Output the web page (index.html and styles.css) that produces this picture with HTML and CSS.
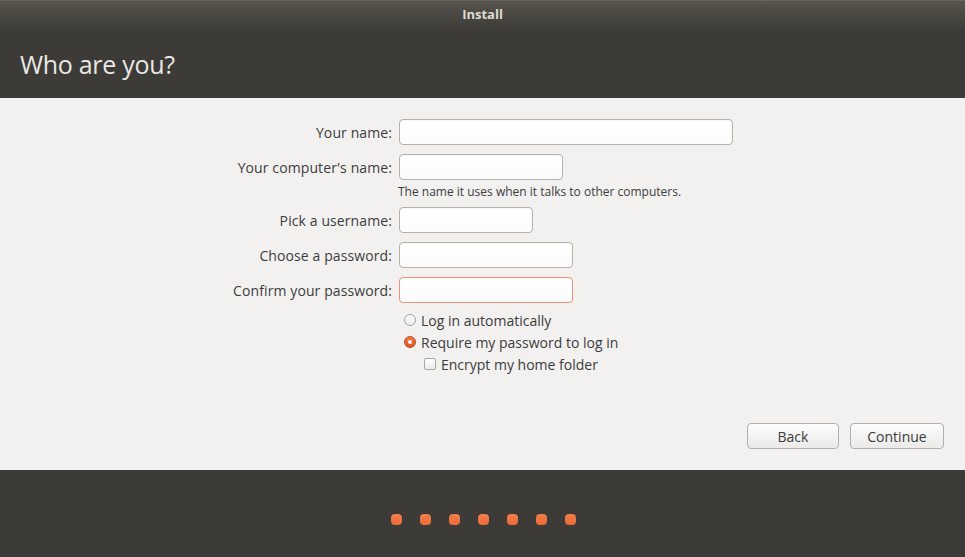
FILE: index.html
```html
<!DOCTYPE html>
<html>
<head>
<meta charset="utf-8">
<title>Install</title>
<link rel="stylesheet" href="styles.css">
</head>
<body>
<div class="window">
  <div class="titlebar">Install</div>
  <div class="header"><h1 class="heading">Who are you?</h1></div>
  <div class="content">
    <div class="form">
      <div class="row row-first">
        <label class="label">Your name:</label>
        <div class="input input-name"></div>
      </div>
      <div class="row">
        <label class="label">Your computer's name:</label>
        <div class="input input-computer"></div>
      </div>
      <div class="hint">The name it uses when it talks to other computers.</div>
      <div class="row row-user">
        <label class="label">Pick a username:</label>
        <div class="input input-user"></div>
      </div>
      <div class="row">
        <label class="label">Choose a password:</label>
        <div class="input input-pass"></div>
      </div>
      <div class="row">
        <label class="label">Confirm your password:</label>
        <div class="input input-pass input-error"></div>
      </div>
      <div class="option option-first">
        <span class="radio"></span>
        <span class="option-text">Log in automatically</span>
      </div>
      <div class="option">
        <span class="radio radio-checked"><span class="radio-dot"></span></span>
        <span class="option-text">Require my password to log in</span>
      </div>
      <div class="option option-sub">
        <span class="checkbox"></span>
        <span class="option-text">Encrypt my home folder</span>
      </div>
    </div>
    <div class="actions">
      <button class="button button-back">Back</button>
      <button class="button button-continue">Continue</button>
    </div>
  </div>
  <div class="footer">
    <div class="dots">
      <span class="dot"></span><span class="dot"></span><span class="dot"></span><span class="dot"></span><span class="dot"></span><span class="dot"></span><span class="dot"></span>
    </div>
  </div>
</div>
</body>
</html>
```

FILE: styles.css
```css
html, body {
  margin: 0;
  padding: 0;
  width: 965px;
  height: 557px;
  overflow: hidden;
  font-family: "Open Sans", "Noto Sans", sans-serif;
}
.window {
  display: flex;
  flex-direction: column;
  height: 557px;
  background: #3c3b37;
}
.titlebar {
  height: 28px;
  line-height: 28px;
  text-align: center;
  font-size: 13px;
  font-weight: bold;
  color: #dfdbd2;
  background: linear-gradient(#5a5650, #46443f 70%, #3e3d39);
  box-shadow: inset 0 1px 0 #6b675f;
}
.header {
  height: 70px;
  background: #3c3b37;
  display: flex;
  align-items: center;
}
.heading {
  margin: 0 0 0 20px;
  padding-top: 2px;
  font-weight: normal;
  font-size: 25px;
  color: #ebe8e3;
  letter-spacing: -0.3px;
}
.content {
  height: 372px;
  background: #f2f1f0;
  display: flex;
  flex-direction: column;
  justify-content: space-between;
}
.form {
  display: flex;
  flex-direction: column;
  color: #3c3c3c;
  font-size: 14px;
}
.row {
  display: flex;
  align-items: center;
  height: 26px;
  margin-top: 9px;
}
.row-first { margin-top: 21px; }
.row-user { margin-top: 8px; }
.label {
  flex: 0 0 399px;
  padding-right: 7px;
  box-sizing: border-box;
  text-align: right;
  white-space: nowrap;
  letter-spacing: 0.1px;
}
.input {
  flex: 0 0 auto;
  height: 26px;
  box-sizing: border-box;
  border: 1px solid #b6b2ac;
  border-radius: 4px;
  background: linear-gradient(#ffffff, #fbfbfb);
  box-shadow: inset 0 1px 1px rgba(0,0,0,0.04);
}
.input-name { width: 334px; }
.input-computer { width: 164px; }
.input-user { width: 134px; }
.input-pass { width: 174px; }
.input-error { border-color: #e9927a; }
.hint {
  margin: 5px 0 0 398px;
  font-size: 12px;
  line-height: 14px;
  color: #3c3c3c;
}
.option {
  display: flex;
  align-items: center;
  height: 20px;
  margin: 2px 0 0 403px;
}
.option-first { margin-top: 7px; }
.option-sub { margin-left: 424px; }
.option-text { margin-left: 5px; }
.radio {
  width: 12px;
  height: 12px;
  box-sizing: border-box;
  border-radius: 50%;
  border: 1px solid #a7a39d;
  background: linear-gradient(#ffffff, #ecebe9);
  display: flex;
  align-items: center;
  justify-content: center;
  margin-left: 1px;
}
.radio-checked {
  border-color: #c5471e;
  background: linear-gradient(#f3774a, #e1531f);
}
.radio-dot {
  width: 4px;
  height: 4px;
  border-radius: 50%;
  background: #ffffff;
}
.checkbox {
  width: 12px;
  height: 12px;
  box-sizing: border-box;
  border-radius: 2px;
  border: 1px solid #aaa6a0;
  background: linear-gradient(#ffffff, #ecebe9);
}
.actions {
  display: flex;
  justify-content: flex-end;
  gap: 11px;
  padding: 0 21px 21px 0;
}
.button {
  height: 26px;
  box-sizing: border-box;
  border: 1px solid #b3afa9;
  border-radius: 4px;
  background: linear-gradient(#fcfcfc, #ebeae8);
  color: #3c3c3c;
  font-family: "Open Sans", "Noto Sans", sans-serif;
  font-size: 14px;
  padding: 0;
}
.button-back { width: 92px; }
.button-continue { width: 94px; }
.footer {
  height: 87px;
  background: #3c3b37;
  display: flex;
  justify-content: center;
}
.dots {
  display: flex;
  gap: 18px;
  margin-top: 44px;
  margin-left: 2px;
}
.dot {
  width: 11px;
  height: 11px;
  border-radius: 4px;
  background: linear-gradient(#f27e4c, #ec6a36);
}
```
